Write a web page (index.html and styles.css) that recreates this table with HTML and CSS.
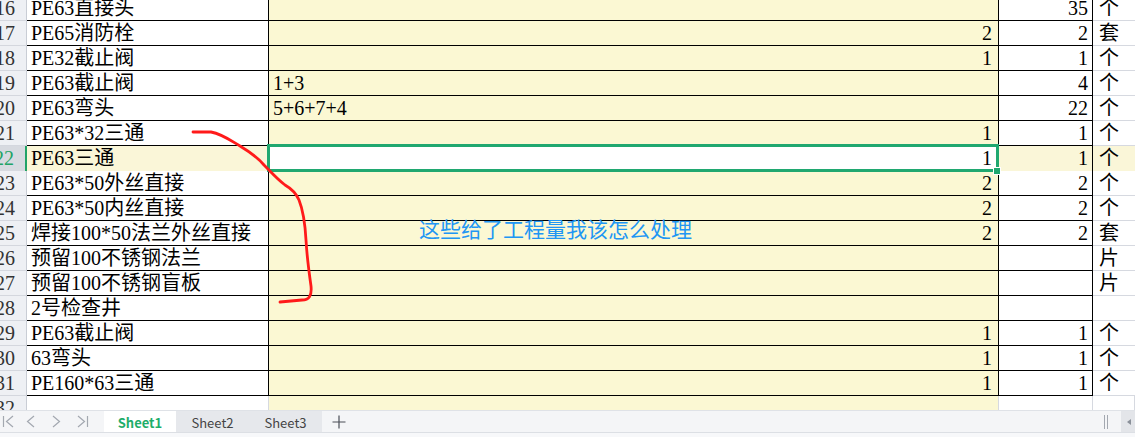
FILE: index.html
```html
<!DOCTYPE html>
<html lang="zh">
<head>
<meta charset="utf-8">
<link rel="stylesheet" href="styles.css">
</head>
<body>
<div class="app">
  <div class="viewport">
    <div class="sheet">
      <div class="row"><div class="rh">16</div><div class="c b">PE63直接头</div><div class="c cc"></div><div class="c d">35</div><div class="c e">个</div></div>
      <div class="row"><div class="rh">17</div><div class="c b">PE65消防栓</div><div class="c cc num">2</div><div class="c d">2</div><div class="c e">套</div></div>
      <div class="row"><div class="rh">18</div><div class="c b">PE32截止阀</div><div class="c cc num">1</div><div class="c d">1</div><div class="c e">个</div></div>
      <div class="row"><div class="rh">19</div><div class="c b">PE63截止阀</div><div class="c cc">1+3</div><div class="c d">4</div><div class="c e">个</div></div>
      <div class="row"><div class="rh">20</div><div class="c b">PE63弯头</div><div class="c cc">5+6+7+4</div><div class="c d">22</div><div class="c e">个</div></div>
      <div class="row"><div class="rh">21</div><div class="c b">PE63*32三通</div><div class="c cc num">1</div><div class="c d">1</div><div class="c e">个</div></div>
      <div class="row row-sel"><div class="rh">22</div><div class="c b">PE63三通</div><div class="c cc num active">1</div><div class="c d">1</div><div class="c e">个</div></div>
      <div class="row"><div class="rh">23</div><div class="c b">PE63*50外丝直接</div><div class="c cc num">2</div><div class="c d">2</div><div class="c e">个</div></div>
      <div class="row"><div class="rh">24</div><div class="c b">PE63*50内丝直接</div><div class="c cc num">2</div><div class="c d">2</div><div class="c e">个</div></div>
      <div class="row"><div class="rh">25</div><div class="c b">焊接100*50法兰外丝直接</div><div class="c cc num">2</div><div class="c d">2</div><div class="c e">套</div></div>
      <div class="row"><div class="rh">26</div><div class="c b">预留100不锈钢法兰</div><div class="c cc"></div><div class="c d"></div><div class="c e">片</div></div>
      <div class="row"><div class="rh">27</div><div class="c b">预留100不锈钢盲板</div><div class="c cc"></div><div class="c d"></div><div class="c e">片</div></div>
      <div class="row"><div class="rh">28</div><div class="c b">2号检查井</div><div class="c cc"></div><div class="c d"></div><div class="c e"></div></div>
      <div class="row"><div class="rh">29</div><div class="c b">PE63截止阀</div><div class="c cc num">1</div><div class="c d">1</div><div class="c e">个</div></div>
      <div class="row"><div class="rh">30</div><div class="c b">63弯头</div><div class="c cc num">1</div><div class="c d">1</div><div class="c e">个</div></div>
      <div class="row"><div class="rh">31</div><div class="c b">PE160*63三通</div><div class="c cc num">1</div><div class="c d">1</div><div class="c e">个</div></div>
      <div class="row row-empty"><div class="rh">32</div><div class="c b"></div><div class="c cc"></div><div class="c d"></div><div class="c e"></div></div>
    </div>
    <svg class="ink" width="1135" height="410" viewBox="0 0 1135 410">
      <path d="M193 132 L211 132 C222 134 230 140 240 146 C250 152 258 158 264 165 C271 172 277 179 285 185 C292 189 296 193 299 200 C303 210 305 222 306 240 C307 258 309 272 311 286 C312 296 309 300 302 300 L280 302" fill="none" stroke="#ff1a1a" stroke-width="2.8" stroke-linecap="round" stroke-linejoin="round"/>
    </svg>
    <div class="note">这些给了工程量我该怎么处理</div>
  </div>
  <div class="tabbar">
    <div class="nav">
      <svg width="100" height="23" viewBox="0 0 100 23">
        <g fill="none" stroke="#a3a8b0" stroke-width="1.2">
          <path d="M3.5 6 V17"/>
          <path d="M13 6 L6.5 11.5 L13 17"/>
          <path d="M34 6 L27.5 11.5 L34 17"/>
          <path d="M53 6 L59.5 11.5 L53 17"/>
          <path d="M78 6 L84.5 11.5 L78 17"/>
          <path d="M87.5 6 V17"/>
        </g>
      </svg>
    </div>
    <div class="tab tab-active">Sheet1</div>
    <div class="tab">Sheet2</div>
    <div class="tab">Sheet3</div>
    <div class="add">
      <svg width="14" height="14" viewBox="0 0 14 14"><path d="M7 0.5 V13.5 M0.5 7 H13.5" stroke="#4a4f57" stroke-width="1.2" fill="none"/></svg>
    </div>
    <div class="spacer"></div>
    <div class="split">
      <svg width="6" height="16" viewBox="0 0 6 16"><path d="M1.5 1 V15 M4.5 1 V15" stroke="#a3a8b0" stroke-width="1" fill="none"/></svg>
    </div>
    <div class="scrollbtn">
      <svg width="12" height="22" viewBox="0 0 12 22"><path d="M6 11 L10 8 V14 Z" fill="#8a9099"/></svg>
    </div>
  </div>
  <div class="strip"></div>
</div>
</body>
</html>
```
FILE: styles.css
```css
* { box-sizing: border-box; }
html, body { margin: 0; padding: 0; background: #ffffff; }
.app {
  width: 1135px;
  height: 437px;
  overflow: hidden;
  display: flex;
  flex-direction: column;
}
.viewport {
  position: relative;
  height: 410px;
  flex: none;
  overflow: hidden;
}
.sheet {
  margin-top: -4px;
  display: flex;
  flex-direction: column;
}
.row {
  display: grid;
  grid-template-columns: 27px 242px 730px 94px 42px;
  height: 25px;
}
.rh {
  display: flex;
  justify-content: flex-end;
  background: #eef0f4;
  border-right: 1px solid #c9cdd5;
  border-bottom: 1px solid #d4d7de;
  padding-right: 11px;
  overflow: hidden;
  white-space: nowrap;
  font-family: "Liberation Serif", serif;
  font-size: 20px;
  line-height: 25px;
  color: #333;
}
.c {
  border-right: 1px solid #000;
  border-bottom: 1px solid #000;
  font-family: "Liberation Serif", "Noto Sans CJK SC", serif;
  font-size: 20px;
  line-height: 25px;
  color: #000;
  white-space: nowrap;
  overflow: hidden;
  padding: 0 4px;
  background: #ffffff;
}
.b { padding-left: 4px; }
.cc { background: #fbf8d3; }
.d { text-align: right; padding-right: 4px; }
.num { text-align: right; padding-right: 6px; }
.e {
  border-right: none;
  border-bottom: 1px solid #d6d9e0;
  padding-left: 6px;
}
.row-sel .rh {
  background: #d7dae0;
  color: #21a366;
  border-right: 2px solid #21a366;
}
.row-sel .b, .row-sel .d, .row-sel .e { background: #faf6d8; }
.row-sel .cc.active {
  background: #ffffff;
  overflow: visible;
  position: relative;
  z-index: 1;
}
.active::after {
  content: "";
  position: absolute;
  left: -2px;
  top: -2px;
  right: -1px;
  bottom: -1px;
  border: 3px solid #20a870;
  pointer-events: none;
}
.active::before {
  content: "";
  position: absolute;
  right: -3px;
  bottom: -4px;
  width: 6px;
  height: 6px;
  background: #20a870;
  border: 1px solid #fff;
  z-index: 2;
}
.row-empty .c {
  border-right: 1px solid #d6d9e0;
  border-bottom: none;
}
.row-empty .rh { border-bottom: none; }
.ink {
  position: absolute;
  left: 0;
  top: 0;
  pointer-events: none;
  z-index: 3;
}
.note {
  position: absolute;
  left: 419px;
  top: 215px;
  font-family: "Noto Sans CJK SC", sans-serif;
  font-size: 21px;
  line-height: 26px;
  color: #2196f3;
  white-space: nowrap;
  z-index: 3;
}
.tabbar {
  flex: none;
  height: 23px;
  display: flex;
  align-items: stretch;
  background: #f4f5f7;
  border-top: 1px solid #dfe2e7;
  border-bottom: 1px solid #dcdfe4;
}
.nav {
  width: 104px;
  display: flex;
  align-items: center;
}
.tab {
  width: 73px;
  display: flex;
  align-items: center;
  justify-content: center;
  background: #e6e8ec;
  font-family: "Noto Sans CJK SC", "Liberation Sans", sans-serif;
  font-size: 13px;
  color: #444;
  padding-top: 1px;
}
.tab-active {
  width: 72px;
  background: #ffffff;
  color: #1fad6a;
  font-weight: bold;
}
.add {
  width: 24px;
  display: flex;
  align-items: center;
  justify-content: flex-end;
}
.spacer { flex: 1; }
.split {
  width: 10px;
  display: flex;
  align-items: center;
}
.scrollbtn {
  width: 14px;
  margin-left: 8px;
  background: #e3e5e9;
  display: flex;
  align-items: center;
}
.strip {
  flex: 1;
  background: #f7f8fa;
}
```
